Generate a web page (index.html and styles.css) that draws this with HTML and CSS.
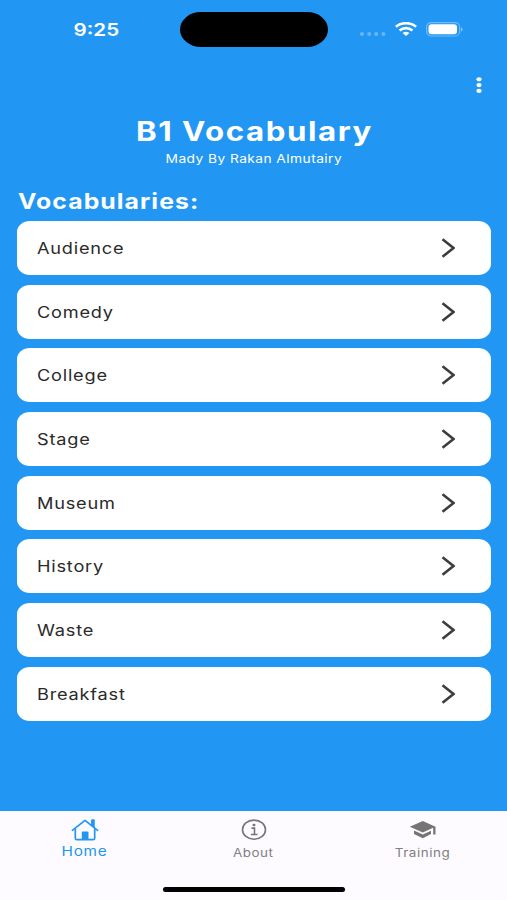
FILE: index.html
```html
<!DOCTYPE html>
<html lang="en">
<head>
<meta charset="utf-8">
<title>B1 Vocabulary</title>
<link rel="stylesheet" href="styles.css">
</head>
<body>
<div class="app">
  <header class="status">
    <div class="clock"><span class="wide">9:25</span></div>
    <div class="island"></div>
    <div class="signals">
      <svg class="dots" width="26" height="4" viewBox="0 0 26 4"><g fill="#67b7f9"><circle cx="2" cy="2" r="2"/><circle cx="9.2" cy="2" r="2"/><circle cx="16.2" cy="2" r="2"/><circle cx="23.4" cy="2" r="2"/></g></svg>
      <svg class="wifi" width="22" height="14" viewBox="0 0 22 14" fill="none" stroke="#fff" stroke-width="2.7"><path d="M.9 4.800C6.500 0 15.500 0 21.100 4.800"/><path d="M4.600 8.600C8.300 5.400 13.700 5.400 17.400 8.600"/><path d="M7.600 10.900Q11 8.600 14.400 10.900L11 13.900Z" fill="#fff" stroke="none"/></svg>
      <svg class="battery" width="37" height="15" viewBox="0 0 37 15"><rect x=".6" y=".6" width="33" height="13.400" rx="4.500" fill="none" stroke="#71bbfa" stroke-width="1.200"/><rect x="2.500" y="2.300" width="28.500" height="10" rx="3" fill="#fff"/><path d="M35 5.200q1.600.6 1.600 2.200T35 9.600z" fill="#8ac7fb"/></svg>
    </div>
  </header>
  <div class="toolbar">
    <svg width="6" height="17" viewBox="0 0 6 17" fill="#fff"><ellipse cx="3" cy="2.300" rx="2.600" ry="2.100"/><ellipse cx="3" cy="8.100" rx="2.600" ry="2.100"/><ellipse cx="3" cy="13.900" rx="2.600" ry="2.100"/></svg>
  </div>
  <main>
    <h1><span class="wide">B1 Vocabulary</span></h1>
    <p class="byline"><span class="wide">Mady By Rakan Almutairy</span></p>
    <h2><span class="wide">Vocabularies:</span></h2>
    <ul class="list">
      <li><span class="wide">Audience</span><svg class="chev" viewBox="0 0 14 20"><path d="M1.500 1.200 12.500 10 1.500 18.800"/></svg></li>
      <li><span class="wide">Comedy</span><svg class="chev" viewBox="0 0 14 20"><path d="M1.500 1.200 12.500 10 1.500 18.800"/></svg></li>
      <li><span class="wide">College</span><svg class="chev" viewBox="0 0 14 20"><path d="M1.500 1.200 12.500 10 1.500 18.800"/></svg></li>
      <li><span class="wide">Stage</span><svg class="chev" viewBox="0 0 14 20"><path d="M1.500 1.200 12.500 10 1.500 18.800"/></svg></li>
      <li><span class="wide">Museum</span><svg class="chev" viewBox="0 0 14 20"><path d="M1.500 1.200 12.500 10 1.500 18.800"/></svg></li>
      <li><span class="wide">History</span><svg class="chev" viewBox="0 0 14 20"><path d="M1.500 1.200 12.500 10 1.500 18.800"/></svg></li>
      <li><span class="wide">Waste</span><svg class="chev" viewBox="0 0 14 20"><path d="M1.500 1.200 12.500 10 1.500 18.800"/></svg></li>
      <li><span class="wide">Breakfast</span><svg class="chev" viewBox="0 0 14 20"><path d="M1.500 1.200 12.500 10 1.500 18.800"/></svg></li>
    </ul>
  </main>
  <nav>
    <div class="tabs">
      <a class="tab active">
        <svg width="28" height="22" viewBox="0 0 28 22" fill="none" stroke="#2196f3" stroke-width="1.700"><path d="M1.400 11.300 14 1.300 26.600 11.300" stroke-linecap="round" stroke-linejoin="round"/><path d="M4.300 9.500V19.300Q4.300 20.700 6 20.700H22Q23.700 20.700 23.700 19.300V9.500"/><path d="M20.500.8H23.300V8.500L20.500 6.200Z" fill="#2196f3" stroke-width=".8"/><path d="M10.800 21V13.500Q10.800 12.600 11.800 12.600H16.500Q17.500 12.600 17.500 13.500V21Z" fill="#2196f3" stroke="none"/></svg>
        <span class="wide">Home</span>
      </a>
      <a class="tab">
        <svg width="26" height="22" viewBox="0 0 26 22" fill="none" stroke="#757575" stroke-width="1.600"><ellipse cx="13" cy="10.700" rx="11.500" ry="9.600"/><path d="M10.500 9.100H13.500V15.300M10 15.500H16.500"/><ellipse cx="13" cy="6" rx="1.500" ry="1.200" fill="#757575" stroke="none"/></svg>
        <span class="wide">About</span>
      </a>
      <a class="tab">
        <svg width="28" height="22" viewBox="0 0 28 22" fill="#757575"><path d="M.8 7.700 13.800 1.900 26.500 7.700V15.400H24.200V8.800L13.800 13.500Z"/><path d="M5 11.500 13.800 15.500 22 11.700V15L13.800 19.200 5 15Z"/></svg>
        <span class="wide">Training</span>
      </a>
    </div>
    <div class="home-bar"></div>
  </nav>
</div>
</body>
</html>
```

FILE: styles.css
```css
* { box-sizing: border-box; }
body { margin: 0; font-family: Inter, "Liberation Sans", sans-serif; }
.app { width: 507px; height: 900px; background: #2196f3; display: flex; flex-direction: column; overflow: hidden; }
h1, h2, p, ul { margin: 0; padding: 0; }
svg { display: block; flex: none; }
/* Letterforms are extended horizontally throughout the interface. */
.wide { display: inline-block; white-space: nowrap; transform: scaleX(1.18); }

.status { height: 59px; padding: 12px 44px 0 0; display: grid; grid-template-columns: 180px 148px 1fr; align-items: start; }
.clock { height: 35px; line-height: 35px; padding-left: 12px; text-align: center; color: #fff; font-size: 17.5px; font-weight: 600; }
.island { height: 35px; border-radius: 21px / 17.5px; background: #000; }
.signals { display: flex; align-items: center; height: 34px; padding-left: 32px; }
.dots { margin-top: 9px; }
.wifi { margin-left: 9px; }
.battery { margin-left: 9px; }

.toolbar { height: 53px; padding: 18px 25px 0 0; display: flex; justify-content: flex-end; }
main { flex: 1; padding: 0 16.5px 0 17.3px; color: #fff; }
h1 { height: 38px; line-height: 38px; font-size: 26.5px; font-weight: 700; text-align: center; letter-spacing: 1.3px; }
.byline { height: 18px; line-height: 19px; font-size: 11.7px; text-align: center; letter-spacing: .36px; }
h2 { height: 53px; padding: 19px 0 0 1px; line-height: 30px; font-size: 21px; font-weight: 700; letter-spacing: .9px; }
h2 .wide, .list .wide { transform-origin: left center; }
.list { list-style: none; display: grid; gap: 9.7px; }
.list li { height: 54px; padding: 0 36px 0 19.5px; border-radius: 13px / 11px; background: #fff; color: #2a2a2a; display: flex; align-items: center; justify-content: space-between; font-size: 15.4px; letter-spacing: .67px; }
.list .wide { padding-top: 1px; }
.chev { width: 14px; height: 20px; fill: none; stroke: #3d3d40; stroke-width: 2.6; }

nav { height: 89px; background: #fdfbff; }
.tabs { height: 76px; padding-top: 8px; display: grid; grid-template-columns: repeat(3, 1fr); }
.tab { display: flex; flex-direction: column; align-items: center; color: #808080; font-size: 11.4px; line-height: 18px; letter-spacing: .45px; }
.tab .wide { margin-top: 3px; }
.tab.active { color: #2196f3; font-size: 13px; letter-spacing: .65px; padding-left: 1px; }
.tab.active .wide { margin-top: 1px; }
.home-bar { width: 182px; height: 5px; margin: 0 auto; border-radius: 3px; background: #000; }
```
